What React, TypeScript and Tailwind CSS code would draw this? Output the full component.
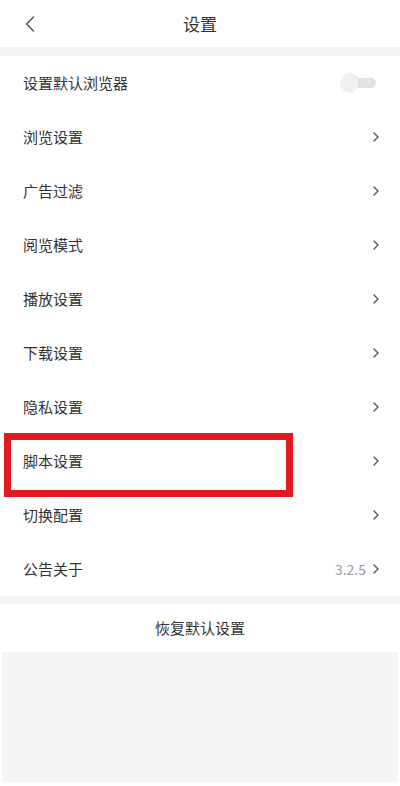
import { ChevronLeft, ChevronRight } from "lucide-react";

const rows = ["浏览设置", "广告过滤", "阅览模式", "播放设置", "下载设置", "隐私设置", "脚本设置", "切换配置"];

function Row({ label, highlight, right }: { label: string; highlight?: boolean; right?: React.ReactNode }) {
  return (
    <div className="relative flex h-[54px] items-center justify-between pl-[23px] pr-[16px]">
      <span className="text-[15px] text-[#333]">{label}</span>
      {right ?? <ChevronRight className="h-4 w-4 text-[#555]" strokeWidth={2} />}
      {highlight && (
        <div className="absolute left-[4px] top-[-1px] h-[64px] w-[289px] border-[7px] border-[#e11a22]" />
      )}
    </div>
  );
}

export default function App() {
  return (
    <div className="flex h-[786px] w-[400px] flex-col bg-white font-['Noto_Sans_CJK_SC',sans-serif]">
      <div className="relative flex h-[47px] items-center justify-center">
        <ChevronLeft className="absolute left-[16px] top-[10px] h-7 w-7 text-[#555]" strokeWidth={1.3} />
        <span className="text-[17px] text-[#333]">设置</span>
      </div>
      <div className="h-[9px] bg-[#f4f4f4]" />
      <Row
        label="设置默认浏览器"
        right={
          <div className="relative mr-[8px] h-[14px] w-[35px]">
            <div className="absolute right-0 top-[2px] h-[10px] w-[22px] rounded-full bg-[#e2e2e2]" />
            <div className="absolute left-0 top-[-2px] h-[18px] w-[18px] rounded-full bg-[#f0f0f0] shadow-[0_0_2px_rgba(0,0,0,0.15)]" />
          </div>
        }
      />
      {rows.map((r) => (
        <Row key={r} label={r} highlight={r === "脚本设置"} />
      ))}
      <Row
        label="公告关于"
        right={
          <div className="flex items-center gap-[2px]">
            <span className="text-[14px] text-[#999]">3.2.5</span>
            <ChevronRight className="h-4 w-4 text-[#555]" strokeWidth={2} />
          </div>
        }
      />
      <div className="h-[8px] bg-[#f4f4f4]" />
      <div className="flex h-[48px] items-center justify-center">
        <span className="text-[15px] text-[#333]">恢复默认设置</span>
      </div>
      <div className="mx-[2px] mb-[4px] flex-1 bg-[#f5f5f5]" />
    </div>
  );
}
